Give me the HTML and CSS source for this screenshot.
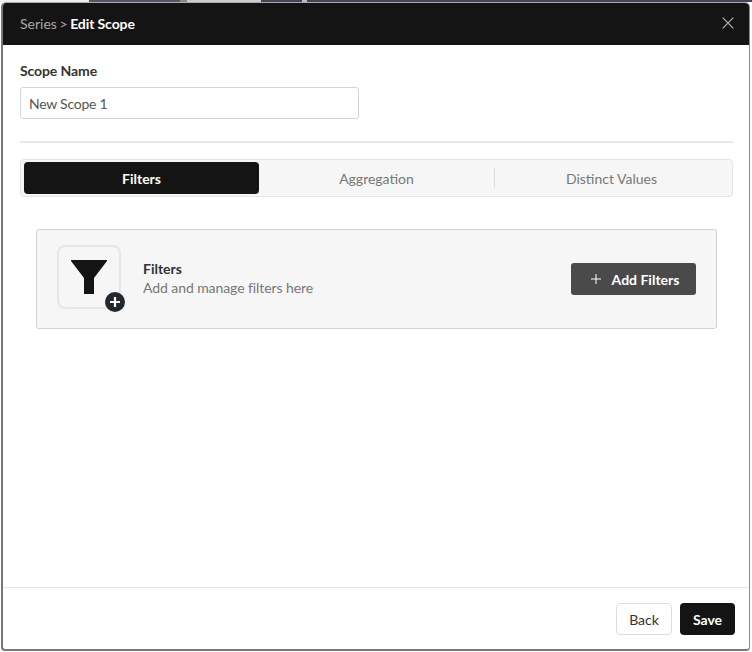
FILE: index.html
```html
<!DOCTYPE html>
<html lang="en">
<head>
<meta charset="utf-8">
<title>Edit Scope</title>
<link rel="stylesheet" href="styles.css">
</head>
<body>
<div class="modal">
  <header class="modal-head">
    <div class="crumb"><span class="crumb-parent">Series &gt; </span><span class="crumb-current">Edit Scope</span></div>
    <svg class="close" width="12" height="12" viewBox="0 0 12 12"><path d="M.7.7l10.6 10.6M11.3.7L.7 11.3" stroke="#b4b4b4" stroke-width="1.2" fill="none"/></svg>
  </header>
  <main class="modal-body">
    <label class="field-label" for="scope">Scope Name</label>
    <input class="field-input" id="scope" value="New Scope 1">
    <hr class="divider">
    <div class="tabs">
      <div class="tab tab-active">Filters</div>
      <div class="tab">Aggregation</div>
      <div class="tab tab-sep">Distinct Values</div>
    </div>
    <section class="card">
      <div class="icon-box">
        <svg width="36" height="34" viewBox="0 0 36 34"><path d="M0 0H36V1L23 18V34H13V18L0 1Z" fill="#141414"/></svg>
        <span class="badge"><svg width="12" height="12" viewBox="0 0 12 12"><path d="M6 1v10M1 6h10" stroke="#fff" stroke-width="2.2"/></svg></span>
      </div>
      <div class="card-text">
        <div class="card-title">Filters</div>
        <div class="card-sub">Add and manage filters here</div>
      </div>
      <button class="add-btn"><svg width="10" height="10" viewBox="0 0 10 10"><path d="M5 0v10M0 5h10" stroke="#fff" stroke-width="1"/></svg>Add Filters</button>
    </section>
  </main>
  <footer class="modal-foot">
    <button class="btn btn-back">Back</button>
    <button class="btn btn-save">Save</button>
  </footer>
</div>
</body>
</html>
```
FILE: styles.css
```css
* { box-sizing: border-box; }
html, body { height: 100%; }
body {
  margin: 0;
  background-color: #fff;
  background-image: linear-gradient(90deg,
    #eee 0 89px, #556 89px 180px, #888 180px 187px,
    #ccc 187px 261px, #445 261px 302px, #bbb 302px 307px, #445 307px);
  background-size: 100% 2px;
  background-repeat: no-repeat;
  font-family: Lato, "Open Sans", sans-serif;
  padding: 2px 2px 1px 1px;
}
.modal {
  height: 649px;
  background: #fff;
  border-style: solid;
  border-color: #aaa #8a8a8a #777 #777;
  border-width: 1px 1px 2px 2px;
  border-radius: 5px 5px 4px 4px;
  display: flex;
  flex-direction: column;
  overflow: hidden;
}
.modal-head {
  height: 42px;
  flex: none;
  background: #141414;
  display: flex;
  align-items: center;
  justify-content: space-between;
  padding: 0 15px 2px 17px;
  font-size: 14px;
}
.crumb-parent { color: #a8a8a8; word-spacing: -1px; }
.crumb-current { color: #fff; font-weight: 700; letter-spacing: -.1px; }
.modal-body { flex: 1; padding: 16px 16px 0 17px; }
.field-label {
  display: block;
  font-size: 14px;
  font-weight: 700;
  color: #333;
  line-height: 20px;
  margin-bottom: 6px;
  letter-spacing: -.1px;
}
.field-input {
  display: block;
  width: 339px;
  height: 32px;
  border: 1px solid #d4d4d4;
  border-radius: 3px;
  padding: 0 8px;
  font: 14px Lato, sans-serif;
  letter-spacing: -.25px;
  color: #555;
  background: #fff;
}
.divider { border: 0; height: 2px; background: #e8e8e8; margin: 22px 0 16px; }
.tabs {
  height: 38px;
  display: flex;
  padding: 2px 3px;
  background: #f6f6f6;
  border: 1px solid #e4e4e4;
  border-radius: 4px;
  margin-bottom: 32px;
}
.tab {
  flex: 1;
  display: flex;
  align-items: center;
  justify-content: center;
  font-size: 14px;
  color: #777;
  border-radius: 4px;
  position: relative;
}
.tab-active { background: #141414; color: #fff; font-weight: 700; }
.tab-sep::before {
  content: "";
  position: absolute;
  left: 0;
  top: 6px;
  bottom: 6px;
  width: 1px;
  background: #ddd;
}
.card {
  margin: 0 16px;
  height: 100px;
  display: flex;
  align-items: center;
  background: #f6f6f6;
  border: 1px solid #d2d2d2;
  border-radius: 3px;
  padding: 0 20px;
}
.icon-box {
  position: relative;
  width: 64px;
  height: 64px;
  flex: none;
  margin: 0 22px 4px 0;
  border: 2px solid #e6e6e6;
  border-radius: 8px;
  display: flex;
  align-items: center;
  justify-content: center;
}
.badge {
  position: absolute;
  right: -6px;
  bottom: -5px;
  width: 20px;
  height: 20px;
  border-radius: 50%;
  background: #21292e;
  display: flex;
  align-items: center;
  justify-content: center;
}
.card-text { flex: 1; margin-bottom: 2px; }
.card-title { font-size: 14px; font-weight: 700; color: #333; line-height: 18px; margin-bottom: 1px; }
.card-sub { font-size: 14px; color: #777; line-height: 18px; letter-spacing: -.08px; }
.add-btn {
  width: 125px;
  height: 32px;
  background: #4a4a4a;
  border: 0;
  border-radius: 3px;
  color: #fff;
  font: 700 14px Lato, sans-serif;
  display: flex;
  align-items: center;
  justify-content: center;
  gap: 11px;
  padding: 0 0 0 3px;
}
.modal-foot {
  height: 62px;
  flex: none;
  border-top: 1px solid #e4e4e4;
  display: flex;
  justify-content: flex-end;
  align-items: flex-start;
  gap: 8px;
  padding: 15px 14px 0 0;
}
.btn {
  height: 32px;
  border-radius: 4px;
  font: 14px Lato, sans-serif;
}
.btn-back { width: 56px; background: #fff; border: 1px solid #ddd; color: #333; }
.btn-save { width: 55px; background: #141414; border: 0; color: #fff; font-weight: 700; }
```
